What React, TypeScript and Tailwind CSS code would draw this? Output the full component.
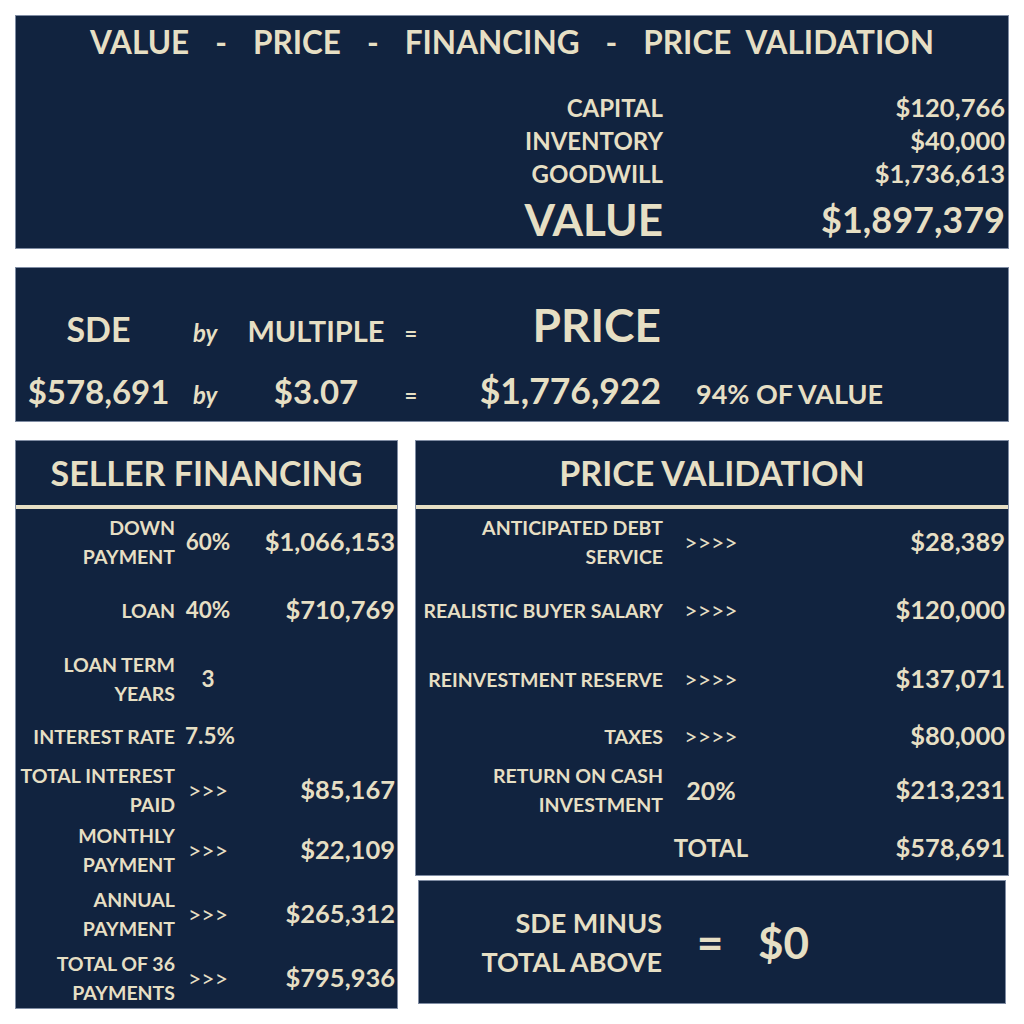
const NAVY = 'bg-[#11233f]';

type FinRow = { label: string[]; mid: string; midClass?: string; value?: string; h: string };

const ARROWS = 'font-normal text-[23px]';

const sellerRows: FinRow[] = [
  { label: ['DOWN', 'PAYMENT'], mid: '60%', value: '$1,066,153', h: 'h-[66px]' },
  { label: ['LOAN'], mid: '40%', value: '$710,769', h: 'h-[70px]' },
  { label: ['LOAN TERM', 'YEARS'], mid: '3', h: 'h-[68px]' },
  { label: ['INTEREST RATE'], mid: '7.5%', h: 'h-[46px]' },
  { label: ['TOTAL INTEREST', 'PAID'], mid: '>>>', midClass: ARROWS, value: '$85,167', h: 'h-[62px]' },
  { label: ['MONTHLY', 'PAYMENT'], mid: '>>>', midClass: ARROWS, value: '$22,109', h: 'h-[58px]' },
  { label: ['ANNUAL', 'PAYMENT'], mid: '>>>', midClass: ARROWS, value: '$265,312', h: 'h-[70px]' },
  { label: ['TOTAL OF 36', 'PAYMENTS'], mid: '>>>', midClass: ARROWS, value: '$795,936', h: 'h-[58px]' },
];

const validationRows: FinRow[] = [
  { label: ['ANTICIPATED DEBT', 'SERVICE'], mid: '>>>>', midClass: ARROWS, value: '$28,389', h: 'h-[66px]' },
  { label: ['REALISTIC BUYER SALARY'], mid: '>>>>', midClass: ARROWS, value: '$120,000', h: 'h-[70px]' },
  { label: ['REINVESTMENT RESERVE'], mid: '>>>>', midClass: ARROWS, value: '$137,071', h: 'h-[68px]' },
  { label: ['TAXES'], mid: '>>>>', midClass: ARROWS, value: '$80,000', h: 'h-[46px]' },
  { label: ['RETURN ON CASH', 'INVESTMENT'], mid: '20%', midClass: 'text-[25px]', value: '$213,231', h: 'h-[62px]' },
];

function ValueRow({ label, value, big }: { label: string; value: string; big?: boolean }) {
  return (
    <div className={`flex items-center leading-none ${big ? 'h-[58px]' : 'h-[33px]'}`}>
      <div className={`w-[647px] text-right ${big ? 'text-[44px]' : 'text-[24px]'}`}>{label}</div>
      <div className={`flex-1 text-right pr-[3px] ${big ? 'text-[36px]' : 'text-[25.5px]'}`}>{value}</div>
    </div>
  );
}

function Label({ lines }: { lines: string[] }) {
  return (
    <div className="text-right text-[19.5px] leading-[29px] whitespace-nowrap">
      {lines.map((l) => (
        <div key={l}>{l}</div>
      ))}
    </div>
  );
}

export default function App() {
  return (
    <div className="w-[1024px] h-[1024px] bg-white p-[15px] flex flex-col gap-[18px] font-['Lato',sans-serif] font-bold text-[#e6dfc4]">
      {/* Value */}
      <div className={`h-[234px] ${NAVY} border border-[#7f8ca3] flex flex-col`}>
        <div className="h-[57px] flex items-center justify-center gap-[26px] text-[31.5px] leading-none whitespace-pre">
          <span>VALUE</span>
          <span>-</span>
          <span>PRICE</span>
          <span>-</span>
          <span>FINANCING</span>
          <span>-</span>
          <span>PRICE  VALIDATION</span>
        </div>
        <div className="mt-[22px]">
          <ValueRow label="CAPITAL" value="$120,766" />
          <ValueRow label="INVENTORY" value="$40,000" />
          <ValueRow label="GOODWILL" value="$1,736,613" />
          <ValueRow label="VALUE" value="$1,897,379" big />
        </div>
      </div>

      {/* Price */}
      <div className={`h-[155px] ${NAVY} border border-[#7f8ca3] flex flex-col`}>
        <div className="mt-[34px] grid grid-cols-[165px_50px_170px_20px_240px_1fr] items-baseline leading-none">
          <div className="text-center text-[34px]">SDE</div>
          <div className="pl-[12px] italic text-[24px]">by</div>
          <div className="text-center text-[29px]">MULTIPLE</div>
          <div className="text-center text-[22px]">=</div>
          <div className="text-right text-[46px]">PRICE</div>
          <div />
        </div>
        <div className="mt-[25px] grid grid-cols-[165px_50px_170px_20px_240px_1fr] items-baseline leading-none">
          <div className="text-center text-[33px]">$578,691</div>
          <div className="pl-[12px] italic text-[24px]">by</div>
          <div className="text-center text-[33px]">$3.07</div>
          <div className="text-center text-[22px]">=</div>
          <div className="text-right text-[35.5px]">$1,776,922</div>
          <div className="pl-[35px] text-[27px]">94% OF VALUE</div>
        </div>
      </div>

      <div className="flex gap-[17px] flex-1">
        {/* Seller financing */}
        <div className={`w-[383px] ${NAVY} border border-[#7f8ca3] flex flex-col`}>
          <div className="h-[64px] flex items-center justify-center text-[34px] leading-none">SELLER FINANCING</div>
          <div className="h-[4px] bg-[#e6dfc4]" />
          {sellerRows.map((r) => (
            <div key={r.label.join()} className={`${r.h} grid grid-cols-[159px_56px_1fr] items-center`}>
              <Label lines={r.label} />
              <div className={`pl-[10px] text-center leading-none ${r.midClass ?? 'text-[22.5px]'}`}>{r.mid}</div>
              <div className="text-right pr-[2px] text-[25.5px] leading-none">{r.value}</div>
            </div>
          ))}
        </div>

        <div className="flex-1 flex flex-col gap-[4px]">
          {/* Price validation */}
          <div className={`h-[436px] ${NAVY} border border-[#7f8ca3] flex flex-col`}>
            <div className="h-[64px] flex items-center justify-center text-[34px] leading-none">PRICE VALIDATION</div>
            <div className="h-[4px] bg-[#e6dfc4]" />
            {validationRows.map((r) => (
              <div key={r.label.join()} className={`${r.h} grid grid-cols-[247px_96px_1fr] items-center`}>
                <Label lines={r.label} />
                <div className={`text-center leading-none ${r.midClass ?? ''}`}>{r.mid}</div>
                <div className="text-right pr-[3px] text-[25.5px] leading-none">{r.value}</div>
              </div>
            ))}
            <div className="h-[54px] grid grid-cols-[247px_96px_1fr] items-center">
              <div />
              <div className="text-center text-[24px] leading-none">TOTAL</div>
              <div className="text-right pr-[3px] text-[25.5px] leading-none">$578,691</div>
            </div>
          </div>

          {/* SDE check */}
          <div className={`mx-[3px] h-[124px] ${NAVY} border border-[#7f8ca3] flex items-center`}>
            <div className="w-[243px] text-right text-[27px] leading-[39px]">
              <div>SDE MINUS</div>
              <div>TOTAL ABOVE</div>
            </div>
            <div className="w-[74px] pl-[22px] text-center text-[46px] leading-none">=</div>
            <div className="pl-[22px] text-[44px] leading-none">$0</div>
          </div>
        </div>
      </div>
    </div>
  );
}
